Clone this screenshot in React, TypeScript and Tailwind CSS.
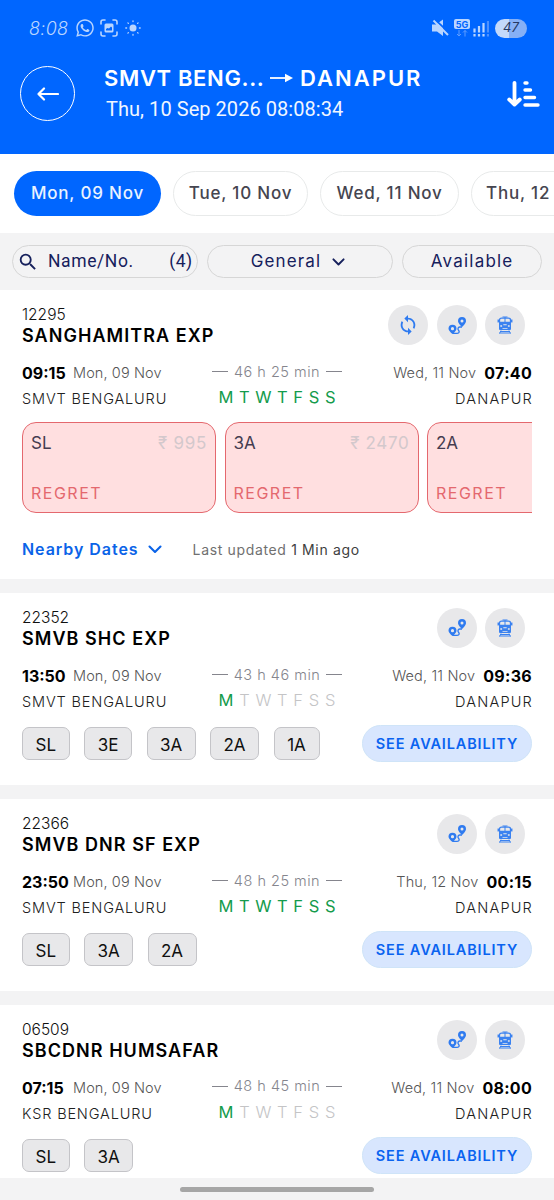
import type { ReactNode } from "react";
import { FaWhatsapp } from "react-icons/fa";
import { MdSearch, MdSync } from "react-icons/md";

type Train = {
    number: string;
    name: string;
    depart: string;
    departDate: string;
    from: string;
    duration: string;
    arrive: string;
    arriveDate: string;
    to: string;
    runs: string;
    classes?: string[];
    fares?: { cls: string; price?: string }[];
};

const DAYS = ["M", "T", "W", "T", "F", "S", "S"];

const DATES = [
    { label: "Mon, 09 Nov", width: "w-[147px]" },
    { label: "Tue, 10 Nov", width: "w-[135px]" },
    { label: "Wed, 11 Nov", width: "w-[139px]" },
    { label: "Thu, 12", width: "w-[135px]" },
];

const CHIP_WIDTH: Record<string, string> = {
    SL: "w-[47.5px]",
    "3E": "w-[48px]",
    "3A": "w-[49px]",
    "2A": "w-[49px]",
    "1A": "w-[46px]",
};

const TRAINS: Train[] = [
    {
        number: "12295",
        name: "SANGHAMITRA EXP",
        depart: "09:15",
        departDate: "Mon, 09 Nov",
        from: "SMVT BENGALURU",
        duration: "46 h 25 min",
        arrive: "07:40",
        arriveDate: "Wed, 11 Nov",
        to: "DANAPUR",
        runs: "1111111",
        fares: [{ cls: "SL", price: "₹ 995" }, { cls: "3A", price: "₹ 2470" }, { cls: "2A" }],
    },
    {
        number: "22352",
        name: "SMVB SHC EXP",
        depart: "13:50",
        departDate: "Mon, 09 Nov",
        from: "SMVT BENGALURU",
        duration: "43 h 46 min",
        arrive: "09:36",
        arriveDate: "Wed, 11 Nov",
        to: "DANAPUR",
        runs: "1000000",
        classes: ["SL", "3E", "3A", "2A", "1A"],
    },
    {
        number: "22366",
        name: "SMVB DNR SF EXP",
        depart: "23:50",
        departDate: "Mon, 09 Nov",
        from: "SMVT BENGALURU",
        duration: "48 h 25 min",
        arrive: "00:15",
        arriveDate: "Thu, 12 Nov",
        to: "DANAPUR",
        runs: "1111111",
        classes: ["SL", "3A", "2A"],
    },
    {
        number: "06509",
        name: "SBCDNR HUMSAFAR",
        depart: "07:15",
        departDate: "Mon, 09 Nov",
        from: "KSR BENGALURU",
        duration: "48 h 45 min",
        arrive: "08:00",
        arriveDate: "Wed, 11 Nov",
        to: "DANAPUR",
        runs: "1000000",
        classes: ["SL", "3A"],
    },
];

const RouteIcon = () => (
    <svg width="19" height="19" viewBox="0 0 19 19" fill="none">
        <path fillRule="evenodd" fill="#2f7bf0" d="M14 1a4 4 0 0 1 4 4c0 2.400-4 6-4 6s-4-3.600-4-6a4 4 0 0 1 4-4zm0 2.400a1.500 1.500 0 1 0 0 3a1.500 1.500 0 0 0 0-3z" />
        <path fillRule="evenodd" fill="#2f7bf0" d="M4.500 8.800a4 4 0 0 1 4 4c0 2.200-4 5.200-4 5.200s-4-3-4-5.200a4 4 0 0 1 4-4zm0 2.300a1.600 1.600 0 1 0 0 3.200a1.600 1.600 0 0 0 0-3.200z" />
        <path stroke="#2f7bf0" strokeWidth="1.300" d="M4.500 17.400h4.600c2.600 0 2.400-2.200 1.400-3.200s-.6-3.200 1.200-3.200h2.300" />
    </svg>
);

const TrainIcon = () => (
    <svg width="16" height="18" viewBox="0 0 16 18" fill="none" stroke="#3b82f0">
        <path strokeWidth="1" d="M5.500 1h5M8 1v5" />
        <path strokeWidth="1.300" d="M2.500 6V4q0-1.800 2-1.800h7q2 0 2 1.800v2M1.200 3.500v3M14.800 3.500v3M2 6.300h12" />
        <path fill="#3b82f0" stroke="none" fillRule="evenodd" d="M2 7h12v6q0 1-1 1H3q-1 0-1-1zM3.300 9.200v1.600h1.800V9.200zM10.900 9.200v1.600h1.800V9.200zM6.300 8.300v1h3.400v-1zM5.500 12v.8h5V12z" />
        <path strokeWidth="1" d="M4 14.500l-1.500 3M12 14.500l1.500 3M3.500 15.500h9M2.500 17h11" />
    </svg>
);

const Chevron = ({ className, color }: { className: string; color: string }) => (
    <svg className={className} viewBox="0 0 14 9" fill="none" stroke={color} strokeWidth="2.100" strokeLinecap="round" strokeLinejoin="round">
        <path d="M1.500 1.500L7 7l5.500-5.500" />
    </svg>
);

const RoundButton = ({ children }: { children: ReactNode }) => (
    <button className="flex size-10 items-center justify-center rounded-full bg-[#e8e8ea]">{children}</button>
);

const StatusBar = () => (
    <div className="flex h-14 items-center pl-[29px] pr-[27px] text-[#b9d5ff]">
        <span className="w-[39px] whitespace-nowrap text-[18px] font-light italic tracking-[0.3px]">8:08</span>
        <FaWhatsapp className="ml-[7px] size-[20px]" />
        <svg className="ml-[5px]" width="18" height="18" viewBox="0 0 18 18" fill="none">
            <path stroke="currentColor" strokeWidth="1.600" strokeLinecap="round" d="M1 5V3q0-2 2-2h2M13 1h2q2 0 2 2v2M17 13v2q0 2-2 2h-2M5 17H3q-2 0-2-2v-2" />
            <rect x="4.500" y="4.500" width="9" height="9" rx="1.500" fill="currentColor" />
            <path fill="#0066ff" d="M6 11.500V10l1.500-1 1.500.5 2-2 1 1v3z" />
        </svg>
        <svg className="ml-[7px]" width="16" height="16" viewBox="0 0 16 16">
            <circle cx="8" cy="8" r="3.500" fill="currentColor" />
            <path stroke="currentColor" strokeWidth="1.300" strokeLinecap="round" d="M8 .8v.8M8 14.400v.8M.8 8h.8M14.400 8h.8M2.900 2.900l.5.500M12.600 12.600l.5.500M2.900 13.100l.5-.5M12.600 3.400l.5-.5" />
        </svg>
        <svg className="ml-auto" width="18" height="18" viewBox="0 0 18 18">
            <path fill="currentColor" d="M1 5.500h4l7-5v16.500l-6-4.500H1z" />
            <path stroke="#0066ff" strokeWidth="1.800" d="M4 .6L18.500 14" />
            <path stroke="currentColor" strokeWidth="2" d="M2.500 1.500L17 16" />
        </svg>
        <div className="ml-[5px] flex w-4 flex-col items-center">
            <span className="flex h-[10px] w-4 items-center justify-center rounded-[2px] bg-[#b9d5ff] text-[9px] font-bold leading-none text-[#0066ff]">5G</span>
            <svg width="12" height="8" viewBox="0 0 12 8" fill="none" stroke="#5f9dff" strokeWidth="1">
                <path d="M3 1v6M1 5l2 2 2-2M9 7.500V1.500M7 3.500l2-2 2 2" />
            </svg>
        </div>
        <svg className="ml-[3px]" width="16" height="17" viewBox="0 0 16 17" strokeWidth="2.200">
            <path stroke="currentColor" d="M1.500 8.500v4M6 6v6.500M10.500 3v9.500M1.500 14v2.500M6 14v2.500M10.500 14v2.500" />
            <path stroke="#4c90ff" d="M15 1v11.500M15 14v2.500" />
        </svg>
        <span className="ml-[6px] flex h-[19px] w-8 items-center justify-center rounded-full bg-linear-to-r from-[#c3d9fb] from-45% to-[#86b0f6] to-45% text-[13px] italic text-[#273a63]">47</span>
    </div>
);

const Header = () => (
    <header className="h-[153.500px] shrink-0 bg-[#0066ff] text-white">
        <StatusBar />
        <div className="flex pl-5 pr-[14px]">
            <button className="mt-[10px] flex size-[55px] items-center justify-center rounded-full border-[1.5px] border-white">
                <svg width="22" height="14" viewBox="0 0 22 14" fill="none" stroke="white" strokeWidth="2.200" strokeLinecap="round" strokeLinejoin="round">
                    <path d="M21 7H1.500M7 1.500L1.500 7 7 12.500" />
                </svg>
            </button>
            <div className="ml-[29px] mt-[7px] flex flex-col">
                <div className="flex h-[30px] items-center whitespace-nowrap text-[22px] font-semibold leading-[30px]">
                    <span className="w-[166px] tracking-[0.65px]">SMVT BENG...</span>
                    <svg width="23" height="10" viewBox="0 0 23 10">
                        <path stroke="white" strokeWidth="1.800" d="M0 5h16" />
                        <path fill="white" d="M15 .8L23 5l-8 4.200z" />
                    </svg>
                    <span className="ml-[7px] tracking-[2px]">DANAPUR</span>
                </div>
                <p className="mt-[3px] pl-[2px] font-[Roboto] text-[20px] leading-[26px] tracking-[0.05px] text-[#f0f6ff]">Thu, 10 Sep 2026 08:08:34</p>
            </div>
            <svg className="ml-auto mt-[24px]" width="34" height="28" viewBox="0 0 34 28" fill="none" stroke="white" strokeWidth="3.800" strokeLinecap="round" strokeLinejoin="round">
                <path d="M8.500 2.800V23M3.200 19.500l5.300 5 5.300-5" />
                <path strokeWidth="3.400" d="M19 3h2M19 10h5.500M19 17.500h9.500M19 25h13" />
            </svg>
        </div>
    </header>
);

const DateTabs = () => (
    <nav className="flex h-[79.500px] shrink-0 items-start gap-[12px] overflow-hidden pl-[14px] pt-[17.500px]">
        {DATES.map((d, i) => (
            <button
                key={d.label}
                className={`${d.width} h-[45px] shrink-0 whitespace-nowrap rounded-full px-[14px] pt-px text-[17px] font-medium tracking-[0.8px] ${
                    i === 0 ? "bg-[#0066ff] text-[#eaf3ff]" : "border-[1.5px] border-[#e8eaea] bg-white text-[#454550]"
                } ${i === 3 ? "text-left" : "text-center"}`}
            >
                {d.label}
            </button>
        ))}
    </nav>
);

const Filters = () => (
    <div className="flex h-[57px] shrink-0 items-start gap-[9px] bg-[#f3f3f4] pl-3 pr-3 pt-3 text-[#16205c]">
        <div className="flex h-[33px] w-[186px] items-center rounded-full border border-[#d6d6d6] pl-[4px] pr-[4px] font-[Roboto] text-[17.5px]">
            <MdSearch className="size-[22px]" />
            <span className="ml-[9px] tracking-[0.6px]">Name/No.</span>
            <span className="ml-auto tracking-[0.5px]">(4)</span>
        </div>
        <button className="flex h-[33px] w-[187px] items-center justify-center rounded-full border border-[#d6d6d6] pr-[4px] pt-px text-[17px] tracking-[1.1px]">
            General
            <Chevron className="ml-[11px] w-[13px]" color="#16205c" />
        </button>
        <button className="h-[33px] w-[140px] rounded-full border border-[#d6d6d6] pt-px text-[17px] tracking-[1.200px]">Available</button>
    </div>
);

const FareList = ({ fares }: { fares: { cls: string; price?: string }[] }) => (
    <>
        <div className="mr-[22px] mt-[11px] flex gap-[8.500px] overflow-hidden">
            {fares.map((f) => (
                <div key={f.cls} className="flex h-[91px] w-[194px] shrink-0 flex-col justify-between rounded-[14px] border-[1.5px] border-[#e4686e] bg-[#ffdfe0] px-[8px] pb-[7px] pt-[8px]">
                    <div className="flex justify-between text-[17px] leading-[24px]">
                        <span className="text-[#453c50]">{f.cls}</span>
                        {f.price && <span className="tracking-[0.7px] text-[#d3c8cc]">{f.price}</span>}
                    </div>
                    <span className="text-[16px] leading-[24px] tracking-[1.5px] text-[#e4686e]">REGRET</span>
                </div>
            ))}
        </div>
        <div className="mt-[24px] flex h-6 items-center">
            <span className="text-[16px] font-semibold tracking-[0.95px] text-[#0a63e8]">Nearby Dates</span>
            <Chevron className="ml-[9px] w-[14px]" color="#0a63e8" />
            <span className="ml-[31px] text-[14px] tracking-[0.65px] text-[#707070]">
                Last updated <span className="text-[#404040]">1 Min ago</span>
            </span>
        </div>
    </>
);

const ClassRow = ({ classes }: { classes: string[] }) => (
    <div className="mr-[22px] mt-[11px] flex h-[37px] items-center justify-between">
        <div className="flex gap-[14.500px]">
            {classes.map((c) => (
                <span key={c} className={`${CHIP_WIDTH[c]} flex h-[33px] items-center justify-center rounded-[7px] border-[1.5px] border-[#c4c4c8] bg-[#e8e8ea] pt-[4px] text-[17px] text-[#101010]`}>
                    {c}
                </span>
            ))}
        </div>
        <button className="h-[37px] w-[170px] whitespace-nowrap rounded-full border border-[#cfe4f8] bg-[#d8e6fe] pt-px text-[14.5px] font-semibold tracking-[0.85px] text-[#0a63f0]">SEE AVAILABILITY</button>
    </div>
);

const TrainCard = ({ train }: { train: Train }) => (
    <article className={`shrink-0 bg-white pl-[22px] pt-[15px] ${train.fares ? "h-[288.600px]" : "h-[191.700px]"}`}>
        <div className="flex h-[41px] justify-between pr-[29px]">
            <div>
                <p className="text-[15.5px] font-light leading-[20px] text-[#101010]">{train.number}</p>
                <h2 className="text-[18px] font-semibold leading-[21px] tracking-[1.05px] text-black">{train.name}</h2>
            </div>
            <div className="flex gap-2">
                {train.fares && (
                    <div className="mr-px">
                        <RoundButton>
                            <MdSync className="size-[22px] text-[#2f7bf0]" />
                        </RoundButton>
                    </div>
                )}
                <RoundButton>
                    <RouteIcon />
                </RoundButton>
                <RoundButton>
                    <TrainIcon />
                </RoundButton>
            </div>
        </div>
        <div className="mr-[22px] mt-[13px] grid grid-cols-[1fr_auto_1fr]">
            <div className="pt-px">
                <div className="flex h-[26px] items-center">
                    <span className="w-[51px] text-[16px] font-bold text-black">{train.depart}</span>
                    <span className="text-[14.5px] font-light tracking-[0.1px] text-[#555]">{train.departDate}</span>
                </div>
                <p className="h-[25px] text-[14.5px] font-light leading-[25px] tracking-[0.85px] text-[#202020]">{train.from}</p>
            </div>
            <div className="flex flex-col items-center">
                <div className="flex h-[25px] w-[130px] items-center justify-between text-[14.5px] font-light tracking-[0.5px] text-[#85858d]">
                    <span className="h-[1.5px] w-4 bg-[#85858d]" />
                    {train.duration}
                    <span className="h-[1.5px] w-4 bg-[#85858d]" />
                </div>
                <div className="flex h-[27px] w-[117px] items-center justify-between text-[16.5px]">
                    {DAYS.map((d, i) => (
                        <span key={i} className={train.runs[i] === "1" ? "text-[#149b4c]" : "font-light text-[#c4c4c6]"}>
                            {d}
                        </span>
                    ))}
                </div>
            </div>
            <div className="pt-px text-right">
                <div className="flex h-[26px] items-center justify-end">
                    <span className="text-[14.5px] font-light tracking-[0.15px] text-[#555]">{train.arriveDate}</span>
                    <span className="ml-[8px] text-[16px] font-bold tracking-[0.3px] text-black">{train.arrive}</span>
                </div>
                <p className="-mr-px h-[25px] text-[14.5px] font-light leading-[25px] tracking-[1.200px] text-[#202020]">{train.to}</p>
            </div>
        </div>
        {train.fares && <FareList fares={train.fares} />}
        {train.classes && <ClassRow classes={train.classes} />}
    </article>
);

const App = () => {
    return (
        <div className="flex h-[1200px] w-[554px] flex-col overflow-hidden bg-white font-[Inter,sans-serif]">
            <Header />
            <DateTabs />
            <Filters />
            <main className="flex h-[888px] flex-col gap-[14.300px] overflow-hidden bg-[#f3f3f4]">
                {TRAINS.map((t) => (
                    <TrainCard key={t.number} train={t} />
                ))}
            </main>
            <footer className="flex h-[22px] shrink-0 justify-center bg-[#f3f3f4] pt-[9px]">
                <div className="h-[5px] w-[194px] rounded-full bg-[#a6a6a6]" />
            </footer>
        </div>
    );
};

export default App;
